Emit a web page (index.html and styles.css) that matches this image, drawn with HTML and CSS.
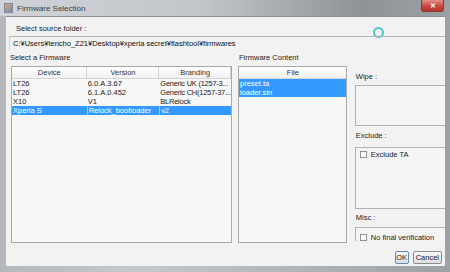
FILE: index.html
```html
<!DOCTYPE html>
<html lang="en">
<head>
    <meta charset="UTF-8">
    <title>Firmware Selection</title>
    <link rel="stylesheet" href="styles.css">
</head>
<body>
    <div class="window">
        <!-- Barra de titulo -->
        <div class="titlebar">
            <span class="app-icon"></span>
            <span class="title">Firmware Selection</span>
            <span class="close-btn">&#x2715;</span>
        </div>

        <div class="frame-body">
            <div class="client">
                <div class="source-row">
                    <span class="source-label">Select source folder :</span>
                    <span class="spinner"></span>
                </div>
                <div class="path-field">C:&yen;Users&yen;tencho_Z21&yen;Desktop&yen;xperia secret&yen;flashtool&yen;firmwares</div>

                <div class="main">
                    <div class="col-firmware">
                        <div class="group-label">Select a Firmware</div>
                        <div class="table-box">
                            <div class="t-row t-head">
                                <span class="c-device">Device</span>
                                <span class="c-version">Version</span>
                                <span class="c-brand">Branding</span>
                            </div>
                            <div class="t-row">
                                <span class="c-device">LT26</span>
                                <span class="c-version">6.0.A.3.67</span>
                                <span class="c-brand">Generic UK (1257-3...</span>
                            </div>
                            <div class="t-row">
                                <span class="c-device">LT26</span>
                                <span class="c-version">6.1.A.0.452</span>
                                <span class="c-brand">Generic CH(1257-37...</span>
                            </div>
                            <div class="t-row">
                                <span class="c-device">X10</span>
                                <span class="c-version">V1</span>
                                <span class="c-brand">BLRelock</span>
                            </div>
                            <div class="t-row selected">
                                <span class="c-device">Xperia S</span>
                                <span class="c-version">Relock_bootloader</span>
                                <span class="c-brand">v2</span>
                            </div>
                        </div>
                    </div>

                    <div class="col-content">
                        <div class="group-label">Firmware Content</div>
                        <div class="table-box">
                            <div class="t-row t-head">
                                <span class="c-file">File</span>
                            </div>
                            <div class="t-row selected">
                                <span class="c-file">preset.ta</span>
                            </div>
                            <div class="t-row selected">
                                <span class="c-file">loader.sin</span>
                            </div>
                        </div>
                    </div>

                    <div class="col-options">
                        <div class="opt-label wipe-label">Wipe :</div>
                        <div class="opt-box wipe-box"></div>
                        <div class="opt-label exclude-label">Exclude :</div>
                        <div class="opt-box exclude-box">
                            <label class="check"><span class="check-box"></span>Exclude TA</label>
                        </div>
                        <div class="opt-label misc-label">Misc :</div>
                        <div class="opt-box misc-box">
                            <label class="check"><span class="check-box"></span>No final verification</label>
                        </div>
                    </div>
                </div>

                <div class="buttons">
                    <button class="btn btn-ok">OK</button>
                    <button class="btn">Cancel</button>
                </div>
            </div>
        </div>
    </div>
</body>
</html>
```

FILE: styles.css
```css
body {
    margin: 0;
    width: 450px;
    height: 272px;
    overflow: hidden;
    font-family: 'Liberation Sans', Arial, sans-serif;
    font-size: 7.5px;
    color: #222;
}

/* VENTANA */
.window {
    width: 450px;
    height: 272px;
    display: flex;
    flex-direction: column;
    background: linear-gradient(90deg, #b4b8bc 0%, #c4c8cc 30%, #a8acb0 80%, #9ca0a4 100%);
}

.titlebar {
    height: 16px;
    display: flex;
    align-items: center;
    padding-left: 4px;
    background: linear-gradient(90deg, #cfd3d7 0%, #c2c6ca 45%, #8e9398 80%, #9ca1a6 100%);
}

.app-icon {
    width: 7px;
    height: 8px;
    background: linear-gradient(135deg, #e8a060 0%, #6a8cc8 100%);
    border: 1px solid #7a8a9a;
    margin-right: 4px;
}

.title {
    font-size: 8px;
    color: #3a3d40;
}

.close-btn {
    margin-left: auto;
    margin-right: 6px;
    align-self: flex-start;
    width: 23px;
    height: 12px;
    background: linear-gradient(180deg, #e0918a 0%, #c9463d 55%, #b8332b 100%);
    border: 1px solid #8a3a35;
    border-top: none;
    border-radius: 0 0 3px 3px;
    color: #fff;
    font-size: 7px;
    font-weight: bold;
    text-align: center;
    line-height: 11px;
    box-sizing: border-box;
}

.frame-body {
    flex: 1;
    display: flex;
    padding: 0 5px 6px 6px;
}

.client {
    flex: 1;
    display: flex;
    flex-direction: column;
    background: #f2f2f2;
    border-top: 1px solid #8a9097;
    overflow: hidden;
}

/* CARPETA */
.source-row {
    display: flex;
    align-items: center;
    height: 14px;
    margin-top: 4px;
    padding-left: 10px;
}

.spinner {
    width: 7px;
    height: 7px;
    border: 2px solid #4ec3d0;
    border-radius: 50%;
    margin-left: 287px;
    margin-top: 8px;
}

.path-field {
    height: 13px;
    line-height: 14px;
    margin-top: 1px;
    margin-left: 3px;
    padding-left: 3px;
    border-top: 1px solid #b4b4b4;
    border-left: 1px solid #d2d2d2;
    white-space: nowrap;
    color: #111;
}

.main {
    display: flex;
    height: 192px;
    margin-top: 1px;
}

.group-label {
    height: 15px;
    line-height: 14px;
}

.col-firmware {
    width: 222px;
    margin-left: 4px;
}

.col-content {
    width: 111px;
    margin-left: 6px;
}

.col-content .group-label {
    padding-left: 1px;
}

.table-box {
    height: 177px;
    border: 1px solid #a8a8a8;
    background: #f7f7f7;
    box-sizing: border-box;
}

.col-firmware .table-box {
    margin-left: 1px;
}

.t-row {
    display: flex;
    height: 9px;
    line-height: 9px;
    white-space: nowrap;
}

.t-row span {
    overflow: hidden;
    padding-left: 1px;
    box-sizing: border-box;
}

.t-head {
    height: 11px;
    line-height: 11px;
    background: linear-gradient(180deg, #ffffff 0%, #f1f1f1 100%);
    border-bottom: 1px solid #d5d5d5;
}

.t-head span {
    text-align: center;
    border-right: 1px solid #d0d0d0;
    color: #333;
}

.c-device {
    width: 75px;
}

.c-version {
    width: 73px;
}

.c-brand {
    width: 72px;
}

.t-row .c-brand {
    letter-spacing: -0.25px;
}

.t-head .c-brand {
    letter-spacing: 0;
}

.c-file {
    flex: 1;
}

.t-head .c-file {
    border-right: none;
}

.selected {
    background: #3399ff;
    color: #fff;
}

.selected span + span {
    border-left: 1px solid #9ccaf5;
}

/* OPCIONES */
.col-options {
    width: 93px;
    margin-left: 7px;
    margin-top: 15px;
    height: 175px;
    overflow: hidden;
}

.opt-label {
    padding-left: 2px;
}

.wipe-label {
    height: 19px;
    line-height: 21px;
}

.exclude-label {
    height: 21px;
    line-height: 20px;
}

.misc-label {
    height: 18px;
    line-height: 18px;
}

.opt-box {
    width: 100px;
    margin-left: 1px;
    border: 1px solid #b0b0b0;
    background: #f4f4f4;
    box-sizing: border-box;
}

.wipe-box {
    height: 41px;
}

.exclude-box {
    height: 62px;
    padding-top: 2px;
}

.misc-box {
    height: 30px;
    padding-top: 5px;
}

.check {
    display: flex;
    align-items: center;
    padding-left: 4px;
    height: 9px;
}

.check-box {
    width: 7px;
    height: 7px;
    border: 1px solid #8e8f8f;
    background: #fcfcfc;
    box-sizing: border-box;
    margin-right: 4px;
}

/* BOTONES */
.buttons {
    display: flex;
    justify-content: flex-end;
    gap: 4px;
    margin-top: 8px;
    padding-right: 3px;
}

.btn {
    height: 13px;
    padding: 0 2px;
    font-family: 'Liberation Sans', Arial, sans-serif;
    font-size: 7.5px;
    color: #222;
    background: linear-gradient(180deg, #f6f6f6 0%, #dedede 100%);
    border: 1px solid #8c8c8c;
    border-radius: 2px;
    line-height: 11px;
}

.btn-ok {
    width: 14px;
    padding: 0;
    border-color: #5a8ac0;
}
```
